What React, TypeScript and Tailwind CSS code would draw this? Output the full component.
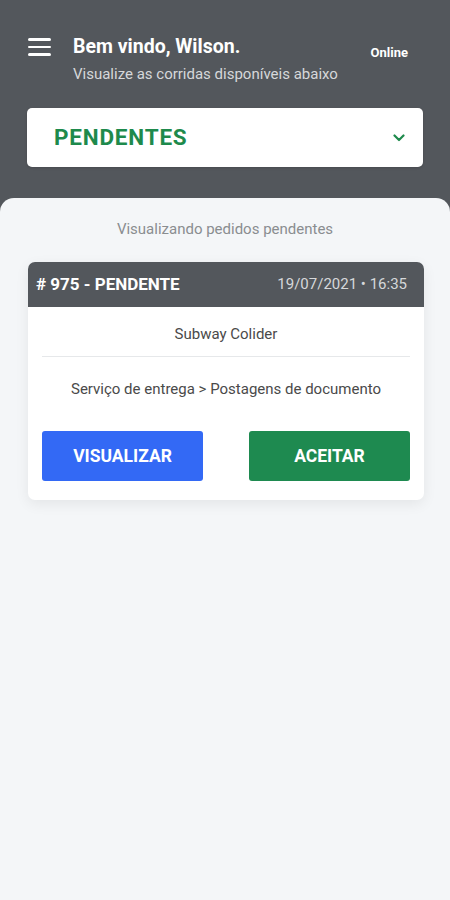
import React from "react";

export default function App() {
  return (
    <div
      className="w-[450px] h-[900px] bg-[#53575c] flex flex-col overflow-hidden"
      style={{ fontFamily: "Roboto, 'Noto Sans', sans-serif" }}
    >
      <div className="px-[27px] pt-[35px]">
        <div className="flex items-start">
          <div className="w-[23px] pt-[3px] flex flex-col gap-[5px] shrink-0 ml-[1px]">
            <div className="h-[2.5px] bg-white rounded-sm" />
            <div className="h-[2.5px] bg-white rounded-sm" />
            <div className="h-[2.5px] bg-white rounded-sm" />
          </div>
          <div className="ml-[22px] flex-1">
            <div className="text-white font-bold text-[19.5px] leading-[23px]">Bem vindo, Wilson.</div>
            <div className="text-[#d6d8da] text-[15px] leading-[18px] mt-[7px]">
              Visualize as corridas disponíveis abaixo
            </div>
          </div>
          <div className="text-white font-bold text-[13px] mt-[8px] mr-[15px]">Online</div>
        </div>
        <div className="mt-[25px] h-[59px] bg-white rounded-[5px] flex items-center justify-between pl-[27px] pr-[18px] shadow">
          <span className="text-[#1e8a4c] font-bold text-[22.5px] tracking-[0.8px]">PENDENTES</span>
          <svg width="12" height="8" viewBox="0 0 12 8" fill="none">
            <path d="M1.5 1.5 L6 6 L10.5 1.5" stroke="#1e8a4c" strokeWidth="2.2" strokeLinecap="round" strokeLinejoin="round" />
          </svg>
        </div>
      </div>
      <div className="mt-[31px] flex-1 bg-[#f4f6f8] rounded-t-[14px] flex flex-col items-center">
        <div className="mt-[21px] text-[#8a8d90] text-[15px] leading-[20px]">Visualizando pedidos pendentes</div>
        <div className="mt-[23px] ml-[2px] w-[396px] bg-white rounded-[7px] shadow-[0_4px_14px_rgba(0,0,0,0.07)] overflow-hidden">
          <div className="h-[45px] bg-[#53575c] flex items-center justify-between pl-[8px] pr-[17px]">
            <span className="text-white font-bold text-[17px]">#&nbsp;975 - PENDENTE</span>
            <span className="text-[#d6d8da] text-[15px]">19/07/2021 • 16:35</span>
          </div>
          <div className="px-[14px]">
            <div className="pt-[17px] pb-[12px] leading-[20px] text-center text-[#4a4a4a] text-[15px] border-b border-[#e6e8ea]">
              Subway Colider
            </div>
            <div className="mt-[22px] leading-[20px] text-center text-[#4a4a4a] text-[15px]">
              Serviço de entrega &gt; Postagens de documento
            </div>
            <div className="mt-[32px] flex justify-between">
              <button className="w-[161px] h-[50px] bg-[#3369f5] rounded-[3px] text-white font-bold text-[17.5px]">
                VISUALIZAR
              </button>
              <button className="w-[161px] h-[50px] bg-[#1e8a50] rounded-[3px] text-white font-bold text-[17.5px]">
                ACEITAR
              </button>
            </div>
            <div className="h-[19px]" />
          </div>
        </div>
      </div>
    </div>
  );
}
